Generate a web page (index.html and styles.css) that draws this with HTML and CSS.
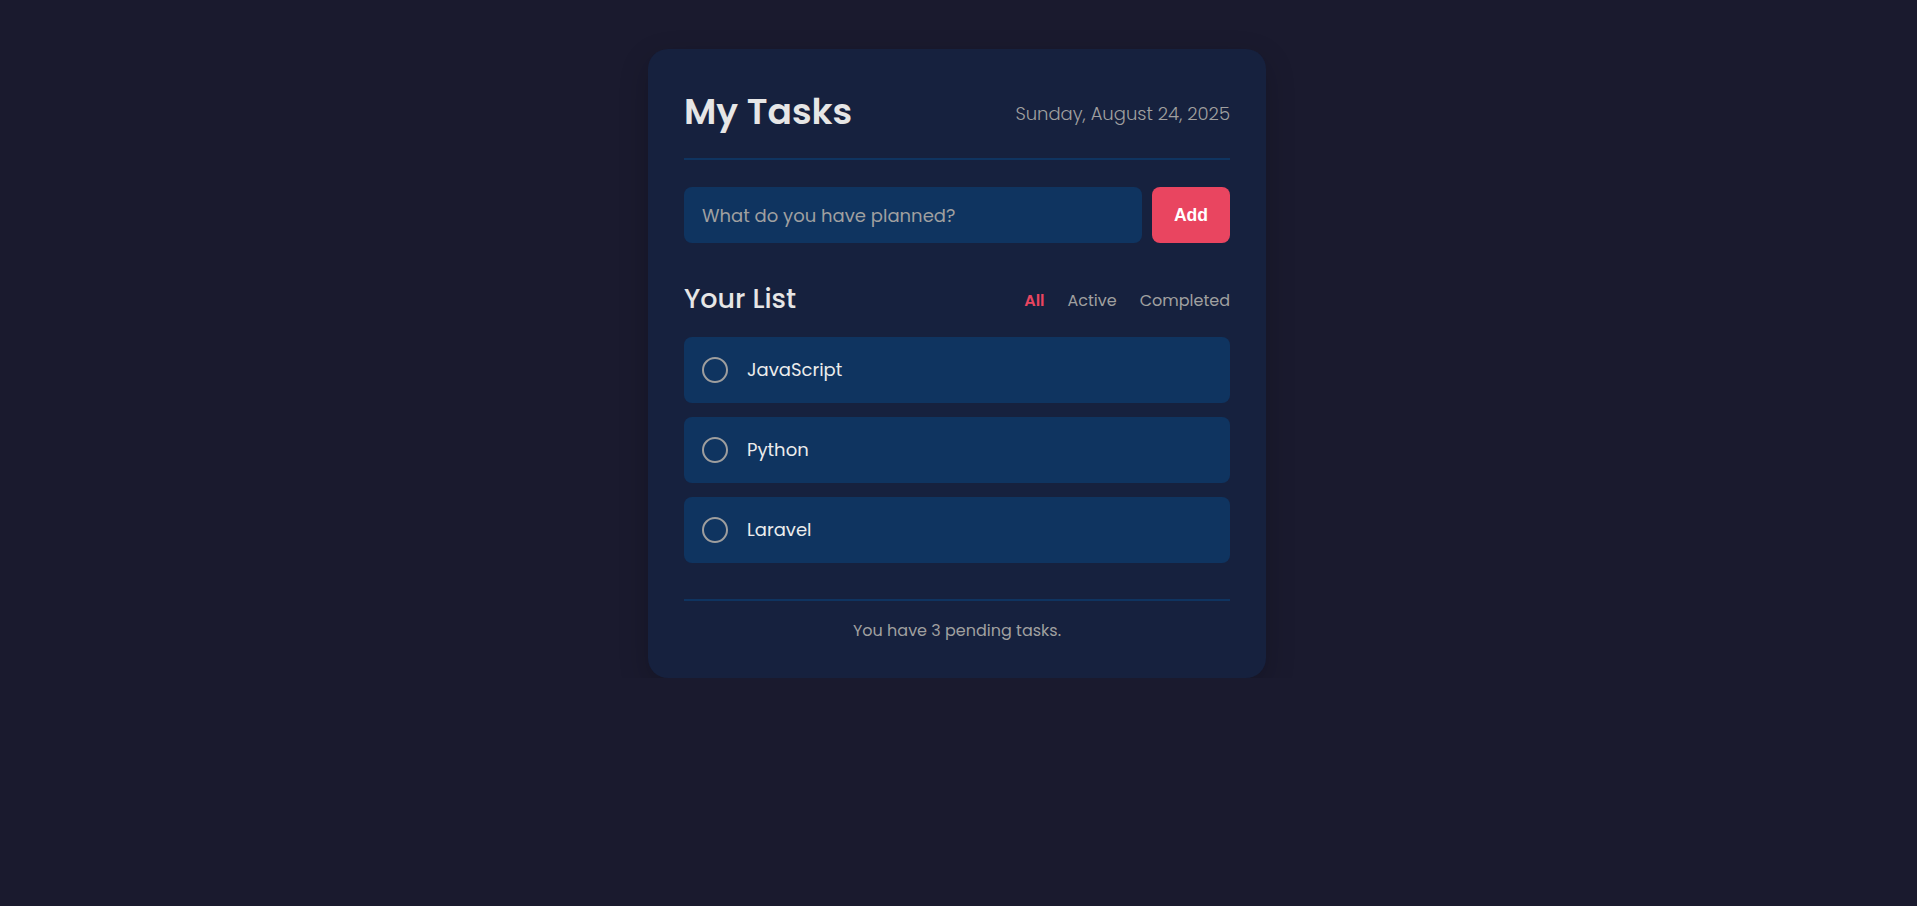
FILE: index.html
```html
<!DOCTYPE html>
<html lang="en">
<head>
<meta charset="utf-8">
<title>My Tasks</title>
<link rel="stylesheet" href="styles.css">
</head>
<body>
  <main class="card">
    <header class="card-header">
      <h1 class="title">My Tasks</h1>
      <span class="date">Sunday, August 24, 2025</span>
    </header>

    <form class="add-form">
      <input class="task-input" type="text" placeholder="What do you have planned?">
      <button class="add-btn" type="button">Add</button>
    </form>

    <div class="list-header">
      <h2 class="list-title">Your List</h2>
      <nav class="filters">
        <span class="filter filter-active">All</span>
        <span class="filter">Active</span>
        <span class="filter">Completed</span>
      </nav>
    </div>

    <ul class="task-list">
      <li class="task"><span class="check"></span><span class="task-text">JavaScript</span></li>
      <li class="task"><span class="check"></span><span class="task-text">Python</span></li>
      <li class="task"><span class="check"></span><span class="task-text">Laravel</span></li>
    </ul>

    <footer class="card-footer">You have 3 pending tasks.</footer>
  </main>
</body>
</html>
```

FILE: styles.css
```css
* { box-sizing: border-box; }

html, body {
  margin: 0;
  background: #1a1a2e;
}

body {
  padding: 49px 3px 0 0;
  font-family: "Poppins", "Inter", "Open Sans", sans-serif;
  color: #e0e0e0;
}

.card {
  width: 618px;
  margin: 0 auto;
  padding: 36px 36px 35px;
  background: #16213e;
  border-radius: 20px;
  box-shadow: 0 10px 30px rgba(0, 0, 0, 0.2);
}

.card-header {
  display: flex;
  justify-content: space-between;
  align-items: center;
  padding-bottom: 19px;
  border-bottom: 2px solid #0f3460;
  margin-bottom: 27px;
}

.title {
  margin: 0;
  font-size: 36px;
  line-height: 54px;
  font-weight: 600;
  color: #e6e6e6;
}

.date {
  padding-top: 4px;
  font-size: 18px;
  line-height: 24px;
  font-weight: 300;
  color: #a0a0a0;
}

.add-form {
  display: flex;
  gap: 10px;
  height: 56px;
  margin: 0;
}

.task-input {
  flex: 1;
  min-width: 0;
  height: 56px;
  padding: 0 18px;
  border: none;
  border-radius: 8px;
  background: #0f3460;
  color: #e0e0e0;
  font-family: "Poppins", "Inter", "Open Sans", sans-serif;
  font-size: 18px;
  outline: none;
}

.task-input::placeholder {
  color: #a0a0a0;
}

.add-btn {
  width: 78px;
  height: 56px;
  padding: 0;
  border: none;
  border-radius: 8px;
  background: #e94560;
  color: #ffffff;
  font-family: "Liberation Sans", Arial, sans-serif;
  font-size: 17.6px;
  font-weight: 700;
}

.list-header {
  display: flex;
  justify-content: space-between;
  align-items: center;
  margin-top: 38px;
  height: 36px;
}

.list-title {
  margin: 0;
  font-size: 27px;
  line-height: 36px;
  font-weight: 500;
  color: #e6e6e6;
}

.filters {
  display: flex;
  gap: 23px;
  padding-top: 3px;
}

.filter {
  font-size: 16px;
  line-height: 24px;
  color: #a0a0a0;
}

.filter-active {
  color: #e94560;
  font-weight: 600;
}

.task-list {
  list-style: none;
  margin: 20px 0 0;
  padding: 0;
  display: flex;
  flex-direction: column;
  gap: 14px;
}

.task {
  display: flex;
  align-items: center;
  gap: 19px;
  height: 66px;
  padding: 0 18px;
  border-radius: 8px;
  background: #0f3460;
}

.check {
  flex: none;
  width: 26px;
  height: 26px;
  border: 2px solid #9e9e9e;
  border-radius: 50%;
}

.task-text {
  font-size: 18px;
  line-height: 24px;
  color: #ececec;
}

.card-footer {
  margin-top: 36px;
  padding-top: 18px;
  border-top: 2px solid #0f3460;
  text-align: center;
  font-size: 16px;
  line-height: 24px;
  color: #a0a0a0;
}
```
